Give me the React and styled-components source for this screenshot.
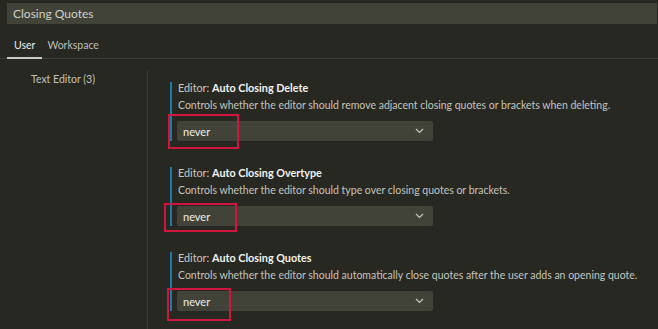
import React from 'react';
import styled, { createGlobalStyle } from 'styled-components';

const GlobalStyle = createGlobalStyle`
  html, body {
    margin: 0;
    padding: 0;
    background: #272822;
    overflow: hidden;
  }
  body {
    font-family: Lato, "Liberation Sans", sans-serif;
    -webkit-font-smoothing: antialiased;
  }
`;

const settings = [
  {
    id: 'delete',
    name: 'Auto Closing Delete',
    description: 'Controls whether the editor should remove adjacent closing quotes or brackets when deleting.',
    mark: { top: -7, left: -9, width: 71, height: 35 },
  },
  {
    id: 'overtype',
    name: 'Auto Closing Overtype',
    description: 'Controls whether the editor should type over closing quotes or brackets.',
    mark: { top: -3, left: -13, width: 73, height: 29 },
  },
  {
    id: 'quotes',
    name: 'Auto Closing Quotes',
    description: 'Controls whether the editor should automatically close quotes after the user adds an opening quote.',
    mark: { top: -3, left: -10, width: 64, height: 33 },
  },
];

export default function App() {
  return (
    <>
      <GlobalStyle />
      <Page>
        <Header>
          <SearchBox>Closing Quotes</SearchBox>
          <Tabs>
            <Tab active>User</Tab>
            <Tab>Workspace</Tab>
          </Tabs>
        </Header>
        <Body>
          <Toc>
            <TocItem>Text Editor (3)</TocItem>
          </Toc>
          <SettingsList>
            {settings.map((s) => (
              <Setting key={s.id}>
                <Title>
                  <Category>Editor: </Category>
                  <Name>{s.name}</Name>
                </Title>
                <Description>{s.description}</Description>
                <SelectWrap>
                  <Select>
                    <span>never</span>
                    <svg width="9" height="6" viewBox="0 0 9 6" fill="none">
                      <path d="M1 1l3.5 3.5L8 1" stroke="#c5c5c0" strokeWidth="1.2" />
                    </svg>
                  </Select>
                  <Highlight style={s.mark} />
                </SelectWrap>
              </Setting>
            ))}
          </SettingsList>
        </Body>
      </Page>
    </>
  );
}

const Page = styled.div`
  width: 658px;
  height: 329px;
  background: #272822;
  color: #cccccc;
`;

const Header = styled.div`
  padding: 3px 1px 0 7px;
  border-bottom: 1px solid #3b3c35;
`;

const SearchBox = styled.div`
  height: 21px;
  background: #414339;
  color: #cfcfc8;
  font-size: 12px;
  line-height: 21px;
  padding-left: 6px;
`;

const Tabs = styled.div`
  display: flex;
  height: 34px;
  align-items: stretch;
`;

const Tab = styled.div`
  display: flex;
  align-items: center;
  padding: 9px 7px 0 7px;
  margin-right: -2px;
  font-size: 10.5px;
  color: ${(p) => (p.active ? '#ededea' : '#bdbdb6')};
  border-bottom: 2px solid ${(p) => (p.active ? '#c9c9c4' : 'transparent')};
  margin-bottom: -1px;
`;

const Body = styled.div`
  display: flex;
  padding-top: 11px;
`;

const Toc = styled.div`
  width: 148px;
  height: 260px;
  border-right: 1px solid #3a3b34;
  padding-left: 31px;
  box-sizing: border-box;
`;

const TocItem = styled.div`
  font-size: 10.5px;
  line-height: 18px;
  color: #c2c2bb;
`;

const SettingsList = styled.div`
  display: flex;
  flex-direction: column;
  gap: 26px;
  padding: 12px 0 0 22px;
`;

const Setting = styled.div`
  border-left: 2px solid #1a7fa7;
  padding-left: 6px;
  width: 440px;
`;

const Title = styled.div`
  font-size: 10.8px;
  line-height: 12px;
  white-space: nowrap;
`;

const Category = styled.span`
  color: #c8c8c2;
`;

const Name = styled.span`
  color: #f2f2ee;
  font-weight: 700;
`;

const Description = styled.div`
  font-size: 10.5px;
  line-height: 16px;
  color: #c4c4be;
  white-space: nowrap;
  margin-top: 3px;
`;

const SelectWrap = styled.div`
  position: relative;
  margin: 8px 0 0 -1px;
  width: 256px;
`;

const Select = styled.div`
  height: 20px;
  background: #414339;
  border-radius: 2px;
  display: flex;
  align-items: center;
  justify-content: space-between;
  padding: 0 9px 0 6px;
  font-size: 11px;
  color: #eeeeea;
`;

const Highlight = styled.div`
  position: absolute;
  box-sizing: border-box;
  border: 2px solid #d0163f;
  pointer-events: none;
`;
